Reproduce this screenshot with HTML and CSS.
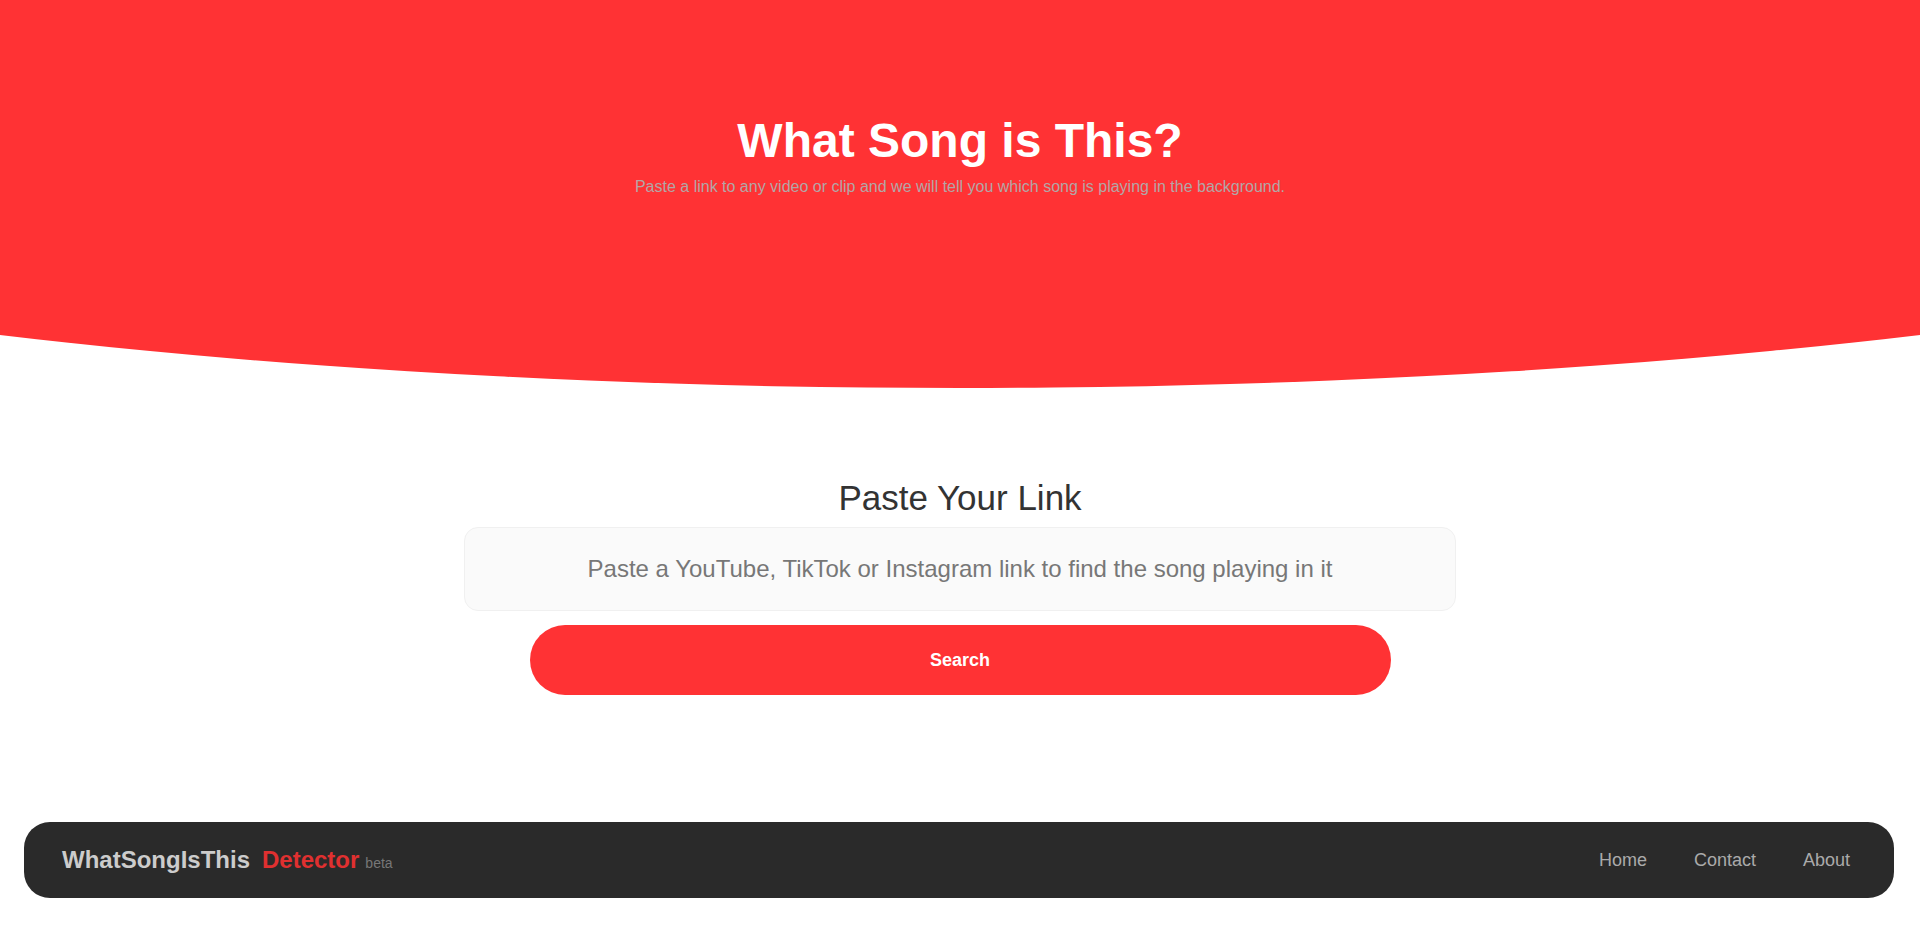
FILE: index.html
```html
<!DOCTYPE html>
<html lang="en">
<head>
<meta charset="utf-8">
<title>What Song is This?</title>
<link rel="stylesheet" href="styles.css">
</head>
<body>
<header class="hero">
  <h1 class="hero-title">What Song is This?</h1>
  <p class="hero-sub">Paste a link to any video or clip and we will tell you which song is playing in the background.</p>
</header>
<main class="finder">
  <h2 class="finder-title">Paste Your Link</h2>
  <form class="finder-form">
    <input class="finder-input" type="text" placeholder="Paste a YouTube, TikTok or Instagram link to find the song playing in it">
    <button class="finder-btn" type="button">Search</button>
  </form>
</main>
<footer class="footer">
  <div class="brand"><span class="brand-main">WhatSongIsThis</span><span class="brand-accent">Detector</span><span class="brand-ver">beta</span></div>
  <nav class="footer-nav">
    <a href="#">Home</a>
    <a href="#">Contact</a>
    <a href="#">About</a>
  </nav>
</footer>
</body>
</html>
```

FILE: styles.css
```css
* { box-sizing: border-box; }
html, body { margin: 0; padding: 0; }
body {
  font-family: "Liberation Sans", Arial, sans-serif;
  background: #ffffff;
  color: #333;
  height: 933px;
  overflow: hidden;
}
.hero {
  height: 388px;
  background: #ff3234;
  clip-path: ellipse(99% 100% at 50% 0);
  display: flex;
  flex-direction: column;
  align-items: center;
  padding-top: 112px;
}
.hero-title {
  margin: 0;
  font-size: 48px;
  font-weight: 700;
  color: #ffffff;
  line-height: 58px;
}
.hero-sub {
  margin: 6px 0 0;
  font-size: 16px;
  color: #b3a6a6;
  line-height: 22px;
}
.finder {
  display: flex;
  flex-direction: column;
  align-items: center;
  padding-top: 90px;
}
.finder-title {
  margin: 0;
  font-size: 35px;
  font-weight: 400;
  color: #333;
  line-height: 40px;
}
.finder-form {
  display: flex;
  flex-direction: column;
  align-items: center;
  margin-top: 9px;
}
.finder-input {
  width: 992px;
  height: 84px;
  border: 1px solid #f0f0f0;
  border-radius: 14px;
  background: #fafafa;
  font-family: "Liberation Sans", Arial, sans-serif;
  font-size: 24px;
  text-align: center;
  color: #555;
  outline: none;
}
.finder-input::placeholder { color: #777; }
.finder-btn {
  margin-top: 14px;
  width: 861px;
  height: 70px;
  border: none;
  border-radius: 35px;
  background: #ff3234;
  color: #ffffff;
  font-family: "Liberation Sans", Arial, sans-serif;
  font-size: 18px;
  font-weight: 700;
}
.footer {
  position: fixed;
  left: 24px;
  right: 26px;
  bottom: 35px;
  height: 76px;
  background: #2a2a2a;
  border-radius: 26px;
  display: flex;
  align-items: center;
  justify-content: space-between;
  padding: 0 44px 0 38px;
}
.brand { display: flex; align-items: baseline; }
.brand-main { color: #cccccc; font-size: 24px; font-weight: 700; }
.brand-accent { color: #e03030; font-size: 24px; font-weight: 700; margin-left: 12px; }
.brand-ver { color: #777; font-size: 14px; margin-left: 6px; }
.footer-nav { display: flex; gap: 47px; }
.footer-nav a { color: #aaaaaa; text-decoration: none; font-size: 18px; }
```
